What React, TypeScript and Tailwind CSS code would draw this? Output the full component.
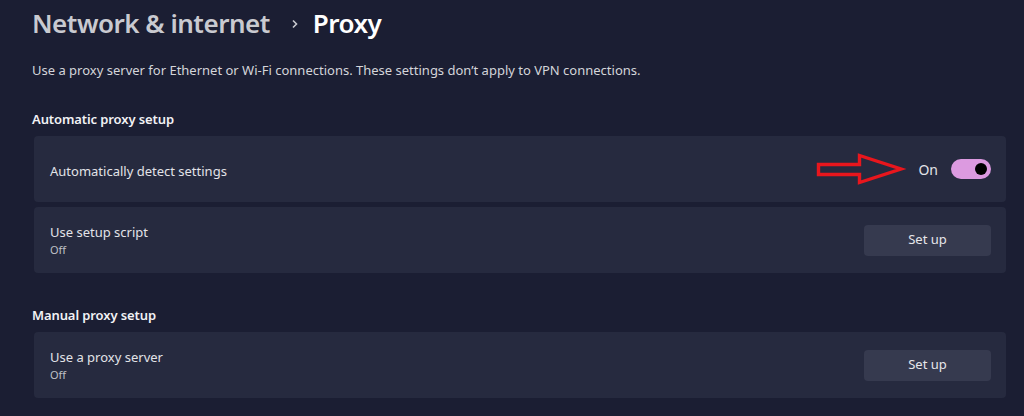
import React from "react";

const font = { fontFamily: '"Noto Sans", "Open Sans", sans-serif' };

function Card({ children, className = "" }: { children: React.ReactNode; className?: string }) {
  return (
    <div
      className={
        "relative ml-[2px] w-[972px] h-[66px] rounded-[4px] bg-[#262a3f] flex items-center pl-[16px] pr-[15px] " +
        className
      }
    >
      {children}
    </div>
  );
}

function SetUp() {
  return (
    <button className="ml-auto w-[127px] h-[31px] rounded-[4px] bg-[#363a4f] text-[13px] text-[#e6e6ea] flex items-center justify-center">
      Set up
    </button>
  );
}

export default function App() {
  return (
    <div
      className="w-[1024px] h-[416px] bg-[#1b1e33] overflow-hidden pl-[32px] pt-[5px] flex flex-col"
      style={font}
    >
      <div className="flex items-center h-[36px] text-[26px] font-semibold leading-[36px] tracking-[-0.5px]">
        <span className="text-[#c9cad0]">Network &amp; internet</span>
        <svg width="10" height="12" viewBox="0 0 10 12" className="ml-[20px] mr-[13px] mt-[2px]">
          <path d="M3 2.5 L6.5 6 L3 9.5" stroke="#c9cad0" strokeWidth="1.6" fill="none" />
        </svg>
        <span className="text-white">Proxy</span>
      </div>

      <div className="mt-[19px] text-[13px] leading-[20px] text-[#d4d5da]">
        Use a proxy server for Ethernet or Wi-Fi connections. These settings don’t apply to VPN connections.
      </div>

      <div className="mt-[29px] text-[13px] leading-[20px] font-semibold text-[#f2f2f5] tracking-[-0.1px]">
        Automatic proxy setup
      </div>

      <div className="mt-[7px] flex flex-col gap-[5px]">
        <Card>
          <span className="text-[13px] leading-[20px] pt-[4px] text-[#e2e3e8]">Automatically detect settings</span>
          <svg
            width="96"
            height="44"
            viewBox="0 0 96 44"
            className="absolute left-[780px] top-[12px]"
          >
            <polygon
              points="4.5,16.5 45.5,16.5 45.5,7.5 87,21 45.5,34.5 45.5,26.5 4.5,26.5"
              fill="none"
              stroke="#e8161d"
              strokeWidth="3.4"
              strokeLinejoin="miter"
            />
          </svg>
          <div className="ml-auto flex items-center gap-[13px]">
            <span className="text-[14px] text-[#e2e3e8]">On</span>
            <div className="w-[40px] h-[20px] rounded-full bg-[#dc9ae0] flex items-center justify-end pr-[4px]">
              <div className="w-[12px] h-[12px] rounded-full bg-black" />
            </div>
          </div>
        </Card>
        <Card>
          <div className="flex flex-col">
            <span className="text-[13px] leading-[20px] text-[#e2e3e8]">Use setup script</span>
            <span className="text-[11px] leading-[16px] text-[#bfc0c6]">Off</span>
          </div>
          <SetUp />
        </Card>
      </div>

      <div className="mt-[32px] text-[13px] leading-[20px] font-semibold text-[#f2f2f5] tracking-[-0.1px]">
        Manual proxy setup
      </div>

      <div className="mt-[7px]">
        <Card>
          <div className="flex flex-col">
            <span className="text-[13px] leading-[20px] text-[#e2e3e8]">Use a proxy server</span>
            <span className="text-[11px] leading-[16px] text-[#bfc0c6]">Off</span>
          </div>
          <SetUp />
        </Card>
      </div>
    </div>
  );
}
